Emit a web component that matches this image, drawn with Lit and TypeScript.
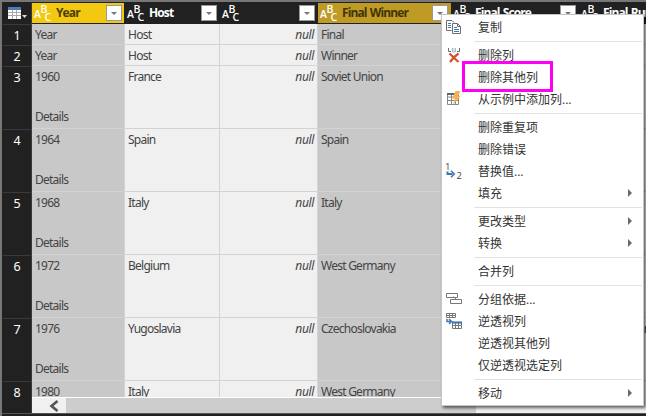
import { LitElement, html, css, svg, nothing } from "lit";
import { customElement, property } from "lit/decorators.js";
import { classMap } from "lit/directives/class-map.js";

interface Column { title: string; width: number; state: "plain" | "selected" | "hover"; }

const columns: Column[] = [
  { title: "Year", width: 93, state: "selected" },
  { title: "Host", width: 95, state: "plain" },
  { title: "", width: 98, state: "plain" },
  { title: "Final Winner", width: 133, state: "hover" },
  { title: "Final Score", width: 128, state: "plain" },
  { title: "Final Runner-up", width: 130, state: "plain" },
];

const rows: { year: string; host: string; winner: string; runner: string; tall: boolean }[] = [
  { year: "Year", host: "Host", winner: "Final", runner: "", tall: false },
  { year: "Year", host: "Host", winner: "Winner", runner: "", tall: false },
  { year: "1960", host: "France", winner: "Soviet Union", runner: "", tall: true },
  { year: "1964", host: "Spain", winner: "Spain", runner: "", tall: true },
  { year: "1968", host: "Italy", winner: "Italy", runner: "", tall: true },
  { year: "1972", host: "Belgium", winner: "West Germany", runner: "", tall: true },
  { year: "1976", host: "Yugoslavia", winner: "Czechoslovakia", runner: "West Germany", tall: true },
  { year: "1980", host: "Italy", winner: "West Germany", runner: "", tall: true },
];

const icons: Record<string, unknown> = {
  copy: svg`
    <path d="M.5 1.500h5.500l2 2M.5 1.500v10h5" fill="none" stroke="#6d6d6d"/>
    <path d="M2 4.500h3M2 6.500h3M2 8.500h3" stroke="#3e78b3"/>
    <path d="M6.500 4.500h5l3 3v7h-8z" fill="#fff" stroke="#6d6d6d"/>
    <path d="M11.500 4.500v3h3" fill="none" stroke="#6d6d6d"/>
    <path d="M8 8.500h3M8 10.500h5M8 12.500h5" stroke="#3e78b3"/>`,
  remove: svg`
    <path d="M2.500 1v3.500h2.500M13.500 1v3.500h-2.500" fill="none" stroke="#6d6d6d"/>
    <path d="M6.500 1v4h3v-4" fill="#d7e3ef" stroke="#a9bdcf"/>
    <path d="M3.500 6.500l9 8.500M12.500 6.500q-5 3.500-8.500 8.500" fill="none" stroke="#d64f2e" stroke-width="2.200"/>`,
  example: svg`
    <path d="M1.500 2.500h11v11h-11zM1.500 6h11M1.500 9.500h11M5.500 3v10.500M9.500 3v10.500" fill="#fff" stroke="#888"/>
    <path d="M1 3h7" stroke="#666" stroke-width="2"/>
    <path d="M9.500 0h5l-2.500 5h2.500l-7.500 9 1.800-6.500h-2.800z" fill="#efb255"/>`,
  replace: svg`
    <path d="M1.500 8.500v2.500h5" fill="none" stroke="#3e78b3" stroke-width="2"/>
    <path d="M5 7.800l3.200 3.200-3.200 3.200" fill="none" stroke="#3e78b3" stroke-width="1.600"/>
    <text x="-1" y="6.500" class="digit">1</text><text x="10.500" y="15.500" class="digit">2</text>`,
  group: svg`
    <path d="M.5 2.500h11v4h-11zM4.500 8.500h11v4h-11z" fill="#fff" stroke="#777"/>
    <path d="M7.500 5.500l3 3" stroke="#777"/>`,
  unpivot: svg`
    <path d="M.5 .5h9v4h-9zM.5 2.500h9M3.500 .5v4M6.500 .5v4" fill="#fff" stroke="#777"/>
    <path d="M1 6v2.500h4M3 6l2.500 2.500-2.500 2.500" fill="none" stroke="#3e78b3" stroke-width="1.500"/>
    <path d="M6.500 9.500h9v6h-9zM6.500 12.500h9M9.500 10v5.500M12.500 10v5.500" fill="#fff" stroke="#777"/>
    <path d="M6 9.500h10" stroke="#3e78b3" stroke-width="2.200"/>`,
};

interface Item { label: string; icon?: string; submenu?: boolean; marked?: boolean; }

const menu: Item[][] = [
  [{ label: "复制", icon: "copy" }],
  [
    { label: "删除列", icon: "remove" },
    { label: "删除其他列", marked: true },
    { label: "从示例中添加列...", icon: "example" },
  ],
  [
    { label: "删除重复项" },
    { label: "删除错误" },
    { label: "替换值...", icon: "replace" },
    { label: "填充", submenu: true },
  ],
  [{ label: "更改类型", submenu: true }, { label: "转换", submenu: true }],
  [{ label: "合并列" }],
  [
    { label: "分组依据...", icon: "group" },
    { label: "逆透视列", icon: "unpivot" },
    { label: "逆透视其他列" },
    { label: "仅逆透视选定列" },
  ],
  [{ label: "移动", submenu: true }],
];

@customElement("column-header")
class ColumnHeader extends LitElement {
  @property() title = "";
  @property() state = "plain";

  static styles = css`
    :host { display: block; }
    .head { display: flex; align-items: center; height: 20px; box-sizing: border-box; padding: 0 3px 0 2px;
      background: #212121; color: #fff; }
    .selected { background: #f2c811; color: #4a3e08; margin-right: 1px; padding-right: 2px; }
    .hover { background: #bf9a24; color: #423509; }
    .type { width: 17px; height: 18px; flex: none; overflow: visible; }
    .type text { fill: #fff; font: 600 10.5px "Open Sans", sans-serif; }
    .name { flex: 1; min-width: 0; margin-left: 5px; white-space: nowrap; overflow: hidden;
      font: 700 12px/20px "Open Sans", "Noto Sans", sans-serif; letter-spacing: -.9px; word-spacing: 1px; }
    .drop { flex: none; width: 16px; height: 16px; box-sizing: border-box; background: #fff; border: 1px solid #999;
      display: flex; align-items: center; justify-content: center; }
  `;

  render() {
    return html`<div class=${classMap({ head: true, [this.state]: true })}>
      <svg class="type" viewBox="0 0 17 18">
        <text x="0" y="14">A</text><text x="6.500" y="8.800">B</text><text x="10.500" y="17">C</text>
      </svg>
      <span class="name">${this.title}</span>
      <span class="drop"><svg width="6" height="3"><path d="M0 0h6l-3 3z" fill="#777"/></svg></span>
    </div>`;
  }
}

@customElement("context-menu")
class ContextMenu extends LitElement {
  static styles = css`
    :host { display: block; box-sizing: border-box; width: 203px; height: 392px; padding: 1px 0; background: #fff;
      border: 1px solid #c6c6c6; box-shadow: 2px 2px 3px rgba(0,0,0,.6); }
    .item { display: flex; align-items: center; height: 22px; padding: 0 11px 0 4px; color: #333;
      font: 12px/22px "Open Sans", "Noto Sans CJK SC", sans-serif; }
    .icon { width: 16px; height: 16px; flex: none; overflow: visible; }
    .digit { font: 9.5px "Open Sans", sans-serif; fill: #444; }
    .label { flex: 1; margin: 2px 0 0 16px; white-space: nowrap; position: relative; }
    .marked::after { content: ""; position: absolute; left: -16px; top: -6px; width: 91px; height: 31px;
      box-sizing: border-box; border: 3px solid #ff00f4; z-index: 1; }
    .rule { height: 1px; margin: 3px 1px 2px 32px; background: #e2e2e2; }
  `;

  render() {
    return menu.map((group, i) => html`
      ${i ? html`<div class="rule"></div>` : nothing}
      ${group.map((it) => html`<div class="item">
        <svg class="icon" viewBox="0 0 16 16">${it.icon ? icons[it.icon] : nothing}</svg>
        <span class=${classMap({ label: true, marked: !!it.marked })}>${it.label}</span>
        ${it.submenu ? html`<svg width="4" height="8"><path d="M0 0l4 4-4 4z" fill="#6a6a6a"/></svg>` : nothing}
      </div>`)}`);
  }
}

@customElement("app-root")
class AppRoot extends LitElement {
  static styles = css`
    :host { display: block; position: relative; width: 646px; height: 416px; box-sizing: border-box; overflow: hidden;
      background: #212121; border-top: 2px solid #777; border-left: 2px solid #777;
      font-family: "Noto Sans", "Open Sans", sans-serif; }
    .frame { display: grid; grid-template-columns: 29px 1fr; padding: 1px 0 0 1px; height: 412px;
      box-sizing: border-box; border-bottom: 1px solid #555; }
    .numbers { display: flex; flex-direction: column; overflow: hidden; border-right: 1px solid #3a3a3a; height: 410px; }
    .corner { height: 21px; flex: none; border-bottom: 1px solid #3a3a3a; }
    .num { flex: none; height: 21px; box-sizing: border-box; border-bottom: 1px solid #3a3a3a; color: #fff;
      text-align: center; font-size: 12.5px; line-height: 21px; }
    .num.tall { height: 63px; }
    .main { display: flex; flex-direction: column; min-width: 0; height: 410px; overflow: hidden; }
    .heads { display: flex; flex: none; height: 21px; box-sizing: border-box; background: #212121; }
    .heads column-header { flex: none; }
    .body { height: 373px; flex: none; overflow: hidden; }
    .row { display: flex; height: 21px; }
    .row.tall { height: 63px; }
    .cell { flex: none; box-sizing: border-box; padding: 1px 3px 0; background: #f0f0f0; color: #444;
      border-right: 1px solid #d3d3d3; border-bottom: 1px solid #d3d3d3; font-size: 12px; line-height: 20px;
      white-space: nowrap; overflow: hidden; letter-spacing: -.75px; }
    .picked { background: #c8c8c8; }
    .null { text-align: right; font-style: italic; letter-spacing: -.35px; }
    .more { margin-top: 20px; }
    .scroll { display: flex; height: 16px; flex: none; background: #f0f0f0; border-top: 1px solid #fff; box-sizing: border-box; }
    .arrow { width: 34px; display: flex; align-items: center; justify-content: center; padding-left: 10px; box-sizing: border-box; }
    .thumb { width: 410px; background: #cdcdcd; }
    context-menu { position: absolute; left: 439px; top: 12px; }
  `;

  render() {
    return html`
      <div class="frame">
        <div class="numbers">
          <div class="corner"><svg width="27" height="20">
            <path d="M5 4h13v12h-13z" fill="#fff"/><path d="M5 4h13v3h-13z" fill="#4a7ebb"/>
            <path d="M5 9.500h13M5 12.500h13M9.500 7v9M13.500 7v9" stroke="#aaa"/>
            <path d="M19 12h5l-2.500 3z" fill="#ddd"/>
          </svg></div>
          ${rows.map((r, i) => html`<div class=${classMap({ num: true, tall: r.tall })}>${i + 1}</div>`)}
        </div>
        <div class="main">
          <div class="heads">${columns.map((c) => html`
            <column-header .title=${c.title} .state=${c.state} style="width:${c.width}px"></column-header>`)}
          </div>
          <div class="body">${rows.map((r) => {
            const values = [r.year, r.host, "null", r.winner, "", r.runner];
            return html`<div class=${classMap({ row: true, tall: r.tall })}>${columns.map((c, i) => html`
              <div class=${classMap({ cell: true, picked: c.state !== "plain", null: i === 2 })} style="width:${c.width}px">
                ${values[i]}${i === 0 && r.tall ? html`<div class="more">Details</div>` : nothing}
              </div>`)}</div>`;
          })}</div>
          <div class="scroll">
            <div class="arrow"><svg width="10" height="12"><path d="M8.500 1l-6 5 6 5" fill="none" stroke="#555" stroke-width="2.600"/></svg></div>
            <div class="thumb"></div>
          </div>
        </div>
      </div>
      <context-menu></context-menu>`;
  }
}
